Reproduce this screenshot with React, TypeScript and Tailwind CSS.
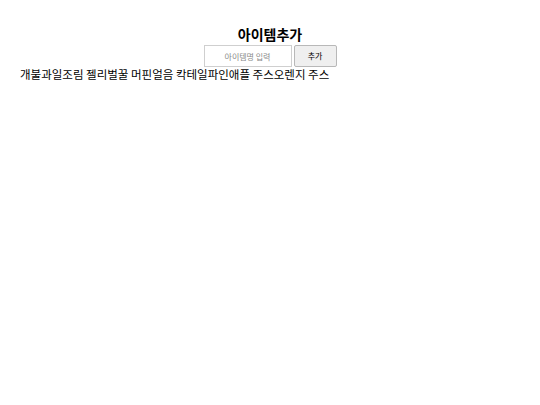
import React, { useState } from "react";

const items = ["개불", "과일조림 ", "젤리", "벌꿀 ", "머핀", "얼음 ", "칵테일", "파인애플 주스", "오렌지 주스"];

export default function App() {
  const [name, setName] = useState("");
  const [list, setList] = useState(items);

  const addItem = () => {
    if (!name.trim()) return;
    setList([...list, name]);
    setName("");
  };

  return (
    <div className="min-h-screen bg-white pt-[25px] px-5 text-black" style={{ fontFamily: '"Noto Sans CJK KR", "Noto Sans", sans-serif' }}>
      <h1 className="text-center text-[14px] font-bold leading-[19px]">아이템추가</h1>
      <div className="flex justify-center gap-[2px] mt-[1px]">
        <input
          value={name}
          onChange={(e) => setName(e.target.value)}
          placeholder="아이템명 입력"
          className="w-[88px] h-[22px] border border-[#cfcfcf] text-center text-[8px] placeholder:text-[#8a8a8a] outline-none"
        />
        <button
          onClick={addItem}
          className="w-[43px] h-[22px] border border-[#b8b8b8] bg-[#efefef] text-[8px] rounded-[2px]"
        >
          추가
        </button>
      </div>
      <div className="text-[11.5px] leading-[15px]">
        {list.map((item, i) => (
          <span key={i}>{item}</span>
        ))}
      </div>
    </div>
  );
}
